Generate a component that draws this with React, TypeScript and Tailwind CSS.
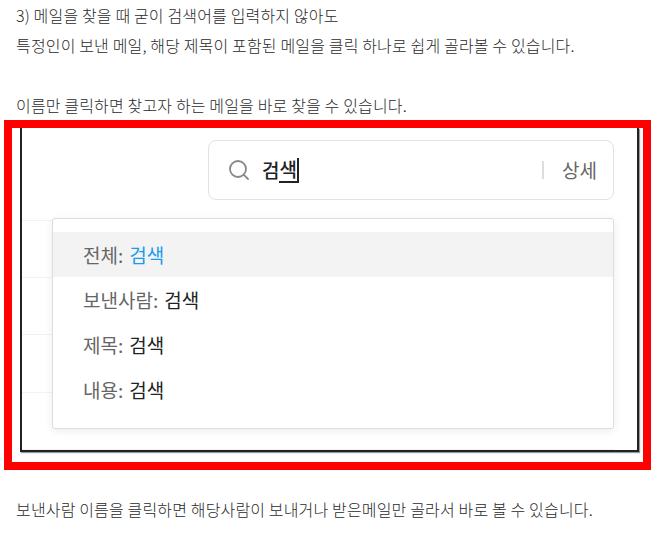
import { Search } from 'lucide-react';

const FONT = "font-['Noto_Sans_CJK_KR','Noto_Sans',sans-serif]";

const options = [
  { label: '전체', active: true },
  { label: '보낸사람', active: false },
  { label: '제목', active: false },
  { label: '내용', active: false },
];

const Line = ({ children }: { children: string }) => (
  <p className="h-[30px] pl-4 text-[16px] leading-[30px] font-light tracking-[0.16px] whitespace-nowrap text-[#2a2a2a]">{children}</p>
);

export default function App() {
  return (
    <div className={`h-[546px] w-[669px] overflow-hidden bg-white ${FONT}`}>
      <div className="h-[120px]">
        <Line>3) 메일을 찾을 때 굳이 검색어를 입력하지 않아도</Line>
        <Line>특정인이 보낸 메일, 해당 제목이 포함된 메일을 클릭 하나로 쉽게 골라볼 수 있습니다.</Line>
        <div className="h-[30px]" />
        <Line>이름만 클릭하면 찾고자 하는 메일을 바로 찾을 수 있습니다.</Line>
      </div>

      {/* Red highlight round the captured image */}
      <div className="ml-1 h-[350px] w-[647px] border-8 border-[#ff0000]">
        <div className="relative ml-2 h-[324px] w-[619px] border-x-2 border-b-2 border-[#222] bg-white shadow-[1px_1px_1px_#999]">
          <div className="flex justify-end pt-3 pr-[23px]">
            <div className="flex h-[60px] w-[406px] items-center rounded-lg border border-[#e2e2e2] pr-4 pl-[18px]">
              <Search size={24} strokeWidth={1.8} className="text-[#888]" />
              <span className="ml-[11px] flex flex-1 items-center text-[19px] font-medium text-[#222]">
                <span>검</span>
                <span className="border-b-2 border-[#222] leading-[24px]">색</span>
                <span className="h-[25px] w-[2px] bg-[#222]" />
              </span>
              <span className="mr-[18px] h-[18px] w-[2px] bg-[#ddd]" />
              <span className="text-[19px] text-[#666]">상세</span>
            </div>
          </div>

          {/* Table rows showing behind the dropdown */}
          <div className="mt-[20px] mr-[23px]">
            <div className="h-[57px] border-t border-[#f2f2f2]" />
            <div className="h-[57px] border-t border-[#f2f2f2]" />
            <div className="h-[58px] border-t border-[#f2f2f2]" />
            <div className="h-[58px] border-y border-[#f2f2f2]" />
          </div>

          <div className="absolute top-[90px] left-[30px] h-[211px] w-[562px] rounded-[3px] border border-[#ddd] bg-white pt-[13px] shadow-[0_2px_8px_rgba(0,0,0,0.08)]">
            {options.map((o) => (
              <div
                key={o.label}
                className={`flex h-[45px] items-center pt-[2px] pl-[30px] text-[19px] ${o.active ? 'bg-[#f3f3f3]' : ''}`}
              >
                <span className="text-[#666]">{o.label}:</span>
                <span className={`ml-[6px] ${o.active ? 'text-[#1a9bec]' : 'text-[#222]'}`}>검색</span>
              </div>
            ))}
          </div>
        </div>
      </div>

      <div className="pt-[24px]">
        <Line>보낸사람 이름을 클릭하면 해당사람이 보내거나 받은메일만 골라서 바로 볼 수 있습니다.</Line>
      </div>
    </div>
  );
}
